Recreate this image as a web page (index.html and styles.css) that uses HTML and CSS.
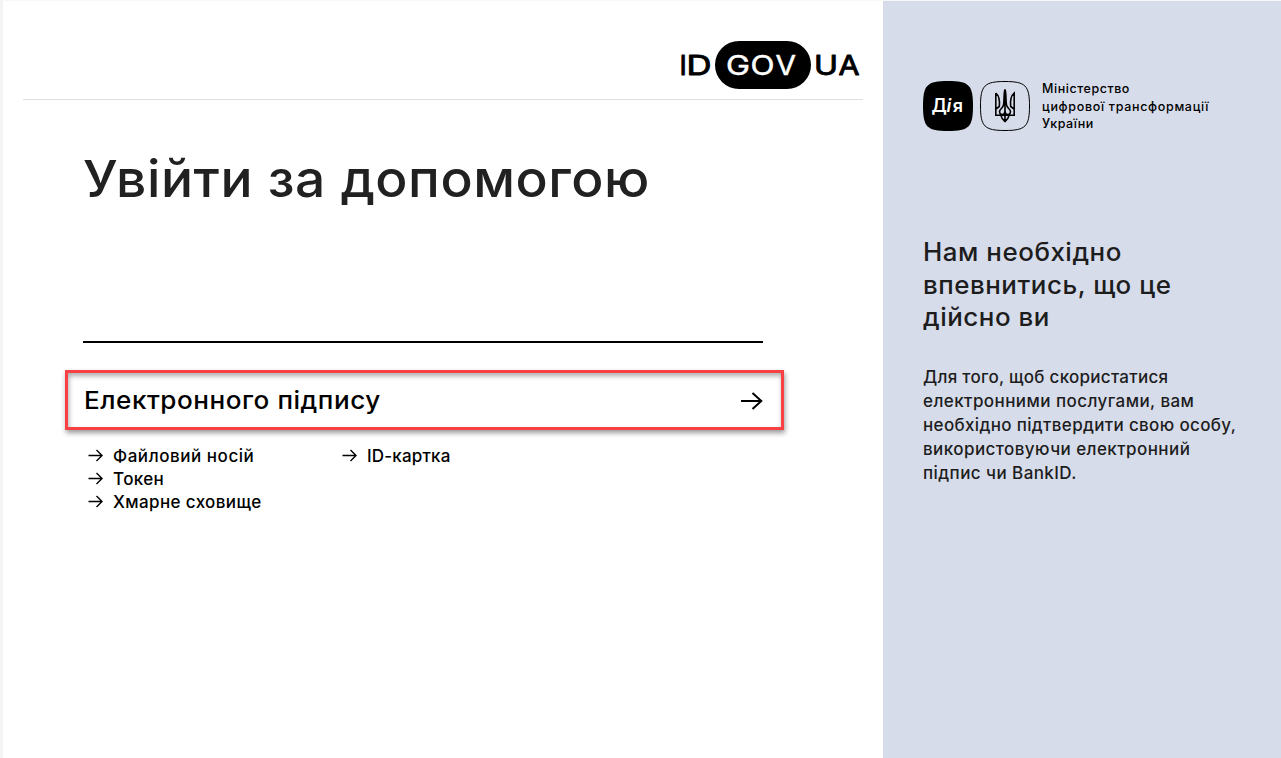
FILE: index.html
```html
<!DOCTYPE html>
<html lang="uk">
<head>
<meta charset="utf-8">
<title>Увійти за допомогою</title>
<link rel="stylesheet" href="styles.css">
</head>
<body>
<div class="page">
  <main class="main">
    <header class="header">
      <svg class="logo" width="182" height="50" viewBox="679 40 182 50" role="img" aria-label="ID GOV UA">
        <rect x="715" y="41" width="96" height="48" rx="24" fill="#000"/>
        <g class="logo-dark">
          <text x="679.5" y="75">I</text>
          <text x="686.5" y="75" textLength="25" lengthAdjust="spacingAndGlyphs">D</text>
          <text x="814" y="75" textLength="24" lengthAdjust="spacingAndGlyphs">U</text>
          <text x="838.5" y="75" textLength="21" lengthAdjust="spacingAndGlyphs">A</text>
        </g>
        <g class="logo-light">
          <text x="726" y="75" textLength="24" lengthAdjust="spacingAndGlyphs">G</text>
          <text x="750.5" y="75" textLength="24" lengthAdjust="spacingAndGlyphs">O</text>
          <text x="775.5" y="75" textLength="20.5" lengthAdjust="spacingAndGlyphs">V</text>
        </g>
      </svg>
    </header>
    <section class="content">
      <h1 class="title">Увійти за допомогою</h1>
      <div class="methods">
        <a class="method">
          <span class="method-name">Електронного підпису</span>
          <svg class="method-arrow" width="24" height="20" viewBox="0 0 24 20"><path d="M2 11H22.500M13.500 3L22.300 11L13.500 19"/></svg>
        </a>
        <div class="options">
          <ul class="column">
            <li class="option"><svg class="arrow" width="16" height="14" viewBox="0 0 16 14"><path d="M.5 6.500H14M8.5 1L14 6.500L8.5 12"/></svg><span class="w1">Файловий носій</span></li>
            <li class="option"><svg class="arrow" width="16" height="14" viewBox="0 0 16 14"><path d="M.5 6.500H14M8.5 1L14 6.500L8.5 12"/></svg><span class="w2">Токен</span></li>
            <li class="option"><svg class="arrow" width="16" height="14" viewBox="0 0 16 14"><path d="M.5 6.500H14M8.5 1L14 6.500L8.5 12"/></svg><span class="w3">Хмарне сховище</span></li>
          </ul>
          <ul class="column">
            <li class="option"><svg class="arrow" width="16" height="14" viewBox="0 0 16 14"><path d="M.5 6.500H14M8.5 1L14 6.500L8.5 12"/></svg><span class="w4">ID-картка</span></li>
          </ul>
        </div>
      </div>
    </section>
  </main>
  <aside class="side">
    <div class="brand">
      <svg width="50" height="50" viewBox="0 0 50 50"><path d="M0 25C0 4 4 0 25 0S50 4 50 25S46 50 25 50S0 46 0 25Z"/><text class="diia" y="31"><tspan x="8.5">Д</tspan><tspan x="23.5" font-style="italic">і</tspan><tspan x="29.8">я</tspan></text></svg>
      <svg class="trident" width="50" height="50" viewBox="0 0 50 50"><path stroke-width="1" d="M.5 25C.5 4.5 4.5 .5 25 .5S49.500 4.500 49.500 25S45.500 49.500 25 49.500S.5 45.500 .5 25Z"/><path stroke-width="1.600" d="M25 8.500C23.500 13 24.500 19 23.500 24C22.800 27.500 20 27.500 19.500 30.500C19.500 33 22 34.500 24 33C25.500 31.500 25 28 25 25M25 8.500C26.500 13 25.500 19 26.500 24C27.200 27.500 30 27.500 30.500 30.500C30.500 33 28 34.500 26 33C24.500 31.500 25 28 25 25M15.800 12V34.200H34.200V12C30.500 15 30 19 30.700 25.500L34.700 28.500M15.800 12C19.500 15 20 19 19.300 25.500L15.300 28.500M20.800 34.200C21.500 37.500 23 39 25 40.500C27 39 28.500 37.500 29.200 34.200M25 9V27M25 33V40.500"/></svg>
      <p class="ministry"><span class="m1">Міністерство</span><span class="m2">цифрової трансформації</span><span class="m3">України</span></p>
    </div>
    <h2 class="side-title"><span>Нам необхідно</span><span>впевнитись, що це</span><span>дійсно ви</span></h2>
    <p class="side-text"><span class="p1">Для того, щоб скористатися</span><span class="p2">електронними послугами, вам</span><span class="p3">необхідно підтвердити свою особу,</span><span class="p4">використовуючи електронний</span><span class="p5">підпис чи BankID.</span></p>
  </aside>
</div>
</body>
</html>
```
FILE: styles.css
```css
* { box-sizing: border-box; }
body { margin: 0; font-family: Inter, "Liberation Sans", sans-serif; font-weight: 500; color: #000; }
h1, h2, p, ul { margin: 0; padding: 0; font-weight: 500; }
ul { list-style: none; }
.page { display: flex; width: 1281px; height: 758px; overflow: hidden; background: #fff; border-left: 3px solid #f4f4f4; border-top: 1px solid #f8f8f8; }
.main { width: 880px; padding: 0 20px; }
.header { display: flex; justify-content: flex-end; height: 99px; padding: 39px 2px 0 0; border-bottom: 1px solid #dedfe0; }
.logo text { font-size: 27px; font-weight: 400; stroke-linejoin: round; stroke-width: .9px; }
.logo-dark { fill: #000; stroke: #000; }
.logo .logo-light text { fill: #fff; stroke: #fff; stroke-width: .5px; }
.content { width: 740px; padding: 47px 0 0 60px; }
.title { height: 64px; font-size: 51px; line-height: 64px; color: #212121; white-space: nowrap; letter-spacing: .5px; transform: scaleX(1.046); transform-origin: left; }
.methods { margin-top: 130px; border-top: 2px solid #000; }
.method { display: flex; align-items: center; justify-content: space-between; height: 60px; margin: 27px -21px 0 -18px; padding: 0 18px 0 16px; border: 3px solid #f94144; box-shadow: 1px 3px 5px rgba(0,0,0,.4), inset 1px 3px 5px rgba(0,0,0,.32); }
.method-name { font-size: 24.5px; letter-spacing: .5px; transform: scaleX(1.065); transform-origin: left; }
.method-arrow, .arrow { fill: none; stroke: #000; stroke-width: 2; flex: none; }
.arrow { stroke-width: 1.4; }
.options { display: flex; padding: 14px 0 0 5px; }
.column { width: 254px; }
.option { display: flex; align-items: center; gap: 9px; height: 23px; font-size: 17px; white-space: nowrap; }
.w1 { letter-spacing: .55px; }
.w2, .w3 { letter-spacing: .38px; }
.w4 { letter-spacing: .18px; }
.side { width: 398px; background: #d7dcea; padding: 80px 0 0 40px; color: #1d1d1d; }
.brand { display: flex; height: 50px; color: #000; }
.diia { fill: #fff; font-family: Inter, sans-serif; font-size: 18px; font-weight: 600; }
.trident { margin-left: 7px; fill: none; stroke: #000; }
.ministry { margin-left: 12px; font-size: 12.5px; line-height: 17.5px; margin-top: -1px; letter-spacing: .55px; }
.m2 { letter-spacing: .68px; }
.ministry span, .side-title span, .side-text span { display: block; width: max-content; white-space: nowrap; }
.side-title { margin-top: 105px; font-size: 25px; line-height: 32.5px; letter-spacing: .5px; transform: scaleX(1.037); transform-origin: left; }
.side-text { margin-top: 31px; font-size: 17px; line-height: 24px; }
.p1 { letter-spacing: .28px; }
.p2, .p4, .p5 { letter-spacing: .43px; }
.p3 { letter-spacing: .34px; }
```
